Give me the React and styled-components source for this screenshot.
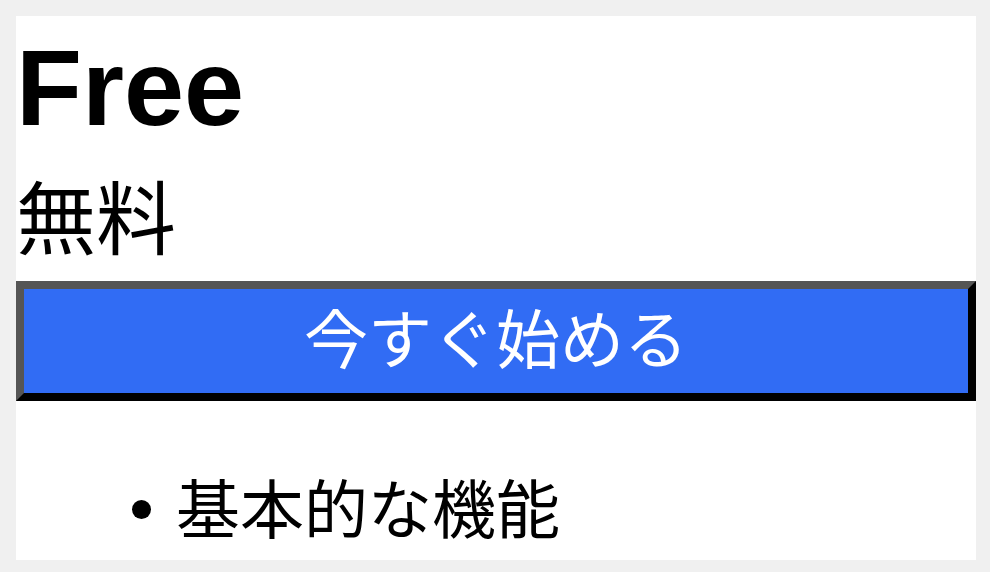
import * as React from 'react';
import styled, { createGlobalStyle } from 'styled-components';

const GlobalStyle = createGlobalStyle`
  html, body {
    margin: 0;
    padding: 0;
    background: #f0f0f0;
  }
  body {
    padding: 16px 14px 12px 16px;
    font-family: "Noto Sans CJK JP", "Liberation Sans", sans-serif;
    color: #000;
  }
`;

const Card = styled.section`
  background: #fff;
  display: flex;
  flex-direction: column;
  width: 960px;
  height: 544px;
  overflow: hidden;
`;

const Plan = styled.h1`
  margin: 18px 0 0 0;
  font-family: "Liberation Sans", Arial, sans-serif;
  font-weight: 700;
  font-size: 108px;
  line-height: 107px;
`;

const Price = styled.p`
  margin: 0;
  font-family: "Noto Sans CJK JP", sans-serif;
  font-size: 80px;
  height: 140px;
  display: flex;
  align-items: center;
  padding-top: 4px;
  box-sizing: border-box;
`;

const StartButton = styled.button`
  box-sizing: border-box;
  width: 100%;
  height: 120px;
  margin: 0;
  padding: 0 0 12px 0;
  background: #316cf4;
  color: #fff;
  font-family: "Noto Sans CJK JP", sans-serif;
  font-size: 64px;
  line-height: 1;
  border-style: solid;
  border-width: 8px;
  border-color: #555 #000 #000 #555;
  cursor: pointer;
`;

const Features = styled.ul`
  margin: 62px 0 0 0;
  padding: 0 0 0 116px;
  list-style: none;
`;

const Feature = styled.li`
  display: flex;
  align-items: center;
  gap: 25px;
  font-family: "Noto Sans CJK JP", sans-serif;
  font-size: 64px;
  line-height: 84px;
`;

const Dot = styled.span`
  flex: none;
  width: 19px;
  height: 19px;
  border-radius: 50%;
  background: #000;
  margin-top: 8px;
`;

export default function App() {
  return (
    <>
      <GlobalStyle />
      <Card>
        <Plan>Free</Plan>
        <Price>無料</Price>
        <StartButton>今すぐ始める</StartButton>
        <Features>
          <Feature>
            <Dot />
            基本的な機能
          </Feature>
        </Features>
      </Card>
    </>
  );
}
